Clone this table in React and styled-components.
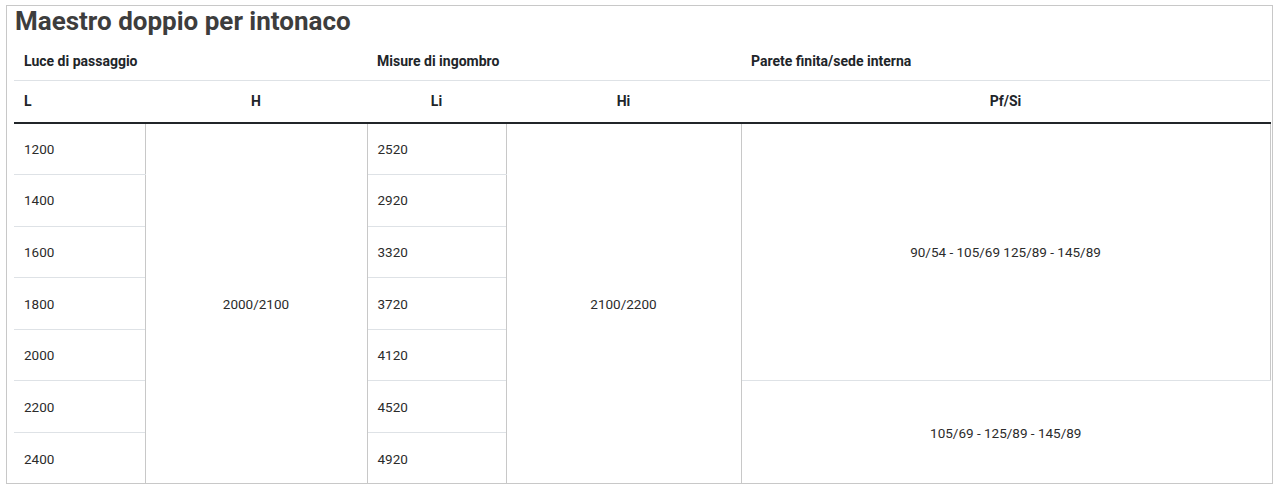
import React from "react";
import styled, { createGlobalStyle } from "styled-components";

const GlobalStyle = createGlobalStyle`
  html, body {
    margin: 0;
    padding: 0;
    background: #ffffff;
  }
  body {
    font-family: Roboto, "Liberation Sans", sans-serif;
    color: #212529;
  }
`;

const lengths = [
  ["1200", "2520"],
  ["1400", "2920"],
  ["1600", "3320"],
  ["1800", "3720"],
  ["2000", "4120"],
  ["2200", "4520"],
  ["2400", "4920"],
];

const App = () => {
  return (
    <>
      <GlobalStyle />
      <Box>
        <Title>Maestro doppio per intonaco</Title>
        <Table>
          <colgroup>
            <col style={{ width: 131 }} />
            <col style={{ width: 222 }} />
            <col style={{ width: 139 }} />
            <col style={{ width: 235 }} />
            <col style={{ width: 529 }} />
          </colgroup>
          <thead>
            <GroupRow>
              <GroupTh colSpan={2}>Luce di passaggio</GroupTh>
              <GroupTh colSpan={2}>Misure di ingombro</GroupTh>
              <GroupTh>Parete finita/sede interna</GroupTh>
            </GroupRow>
            <ColRow>
              <ColTh>L</ColTh>
              <ColTh center>H</ColTh>
              <ColTh center>Li</ColTh>
              <ColTh center>Hi</ColTh>
              <ColTh center>Pf/Si</ColTh>
            </ColRow>
          </thead>
          <Body>
            {lengths.map(([l, li], i) => (
              <Row key={l}>
                <Cell last={i === lengths.length - 1}>{l}</Cell>
                {i === 0 && <SpanCell rowSpan={7}>2000/2100</SpanCell>}
                <Cell last={i === lengths.length - 1}>{li}</Cell>
                {i === 0 && <SpanCell rowSpan={7}>2100/2200</SpanCell>}
                {i === 0 && (
                  <PfCell rowSpan={5} boxed>
                    90/54 - 105/69 125/89 - 145/89
                  </PfCell>
                )}
                {i === 5 && <PfCell rowSpan={2}>105/69 - 125/89 - 145/89</PfCell>}
              </Row>
            ))}
          </Body>
        </Table>
      </Box>
    </>
  );
};

const Box = styled.div`
  box-sizing: border-box;
  margin: 5px 0 0 6px;
  width: 1267px;
  height: 479px;
  border: 1px solid #c8c8c8;
  padding: 0 1px 0 7px;
  overflow: hidden;
`;

const Title = styled.h2`
  margin: 0 0 6px 1px;
  font-family: Roboto, "Liberation Sans", sans-serif;
  font-size: 26px;
  font-weight: 700;
  line-height: 30px;
  color: #3d3d3d;
`;

const Table = styled.table`
  width: 1256px;
  table-layout: fixed;
  border-collapse: collapse;
  font-size: 13.5px;
`;

const GroupRow = styled.tr`
  height: 38px;
  border-bottom: 1px solid #dee2e6;
`;

const GroupTh = styled.th`
  padding: 0 10px;
  text-align: left;
  font-size: 14px;
  font-weight: 700;
  color: #212529;
  vertical-align: middle;
`;

const ColRow = styled.tr`
  height: 43px;
`;

const ColTh = styled.th`
  padding: 0 10px;
  text-align: ${(p) => (p.center ? "center" : "left")};
  font-size: 14px;
  font-weight: 700;
  color: #212529;
  vertical-align: middle;
`;

const Body = styled.tbody`
  border-top: 2px solid #212529;
`;

const Row = styled.tr`
  height: 51.6px;
`;

const Cell = styled.td`
  padding: 0 10px;
  color: #2b2b2b;
  vertical-align: middle;
  border-bottom: ${(p) => (p.last ? "none" : "1px solid #dee2e6")};
`;

const SpanCell = styled.td`
  padding: 0 10px;
  text-align: center;
  color: #2b2b2b;
  vertical-align: middle;
  border-left: 1px solid #c8c8c8;
  border-right: 1px solid #c8c8c8;
`;

const PfCell = styled.td`
  padding: 0 10px;
  text-align: center;
  color: #2b2b2b;
  vertical-align: middle;
  border-left: 1px solid #c8c8c8;
  border-right: ${(p) => (p.boxed ? "1px solid #c8c8c8" : "none")};
  border-bottom: ${(p) => (p.boxed ? "1px solid #dee2e6" : "none")};
`;

export default App;
